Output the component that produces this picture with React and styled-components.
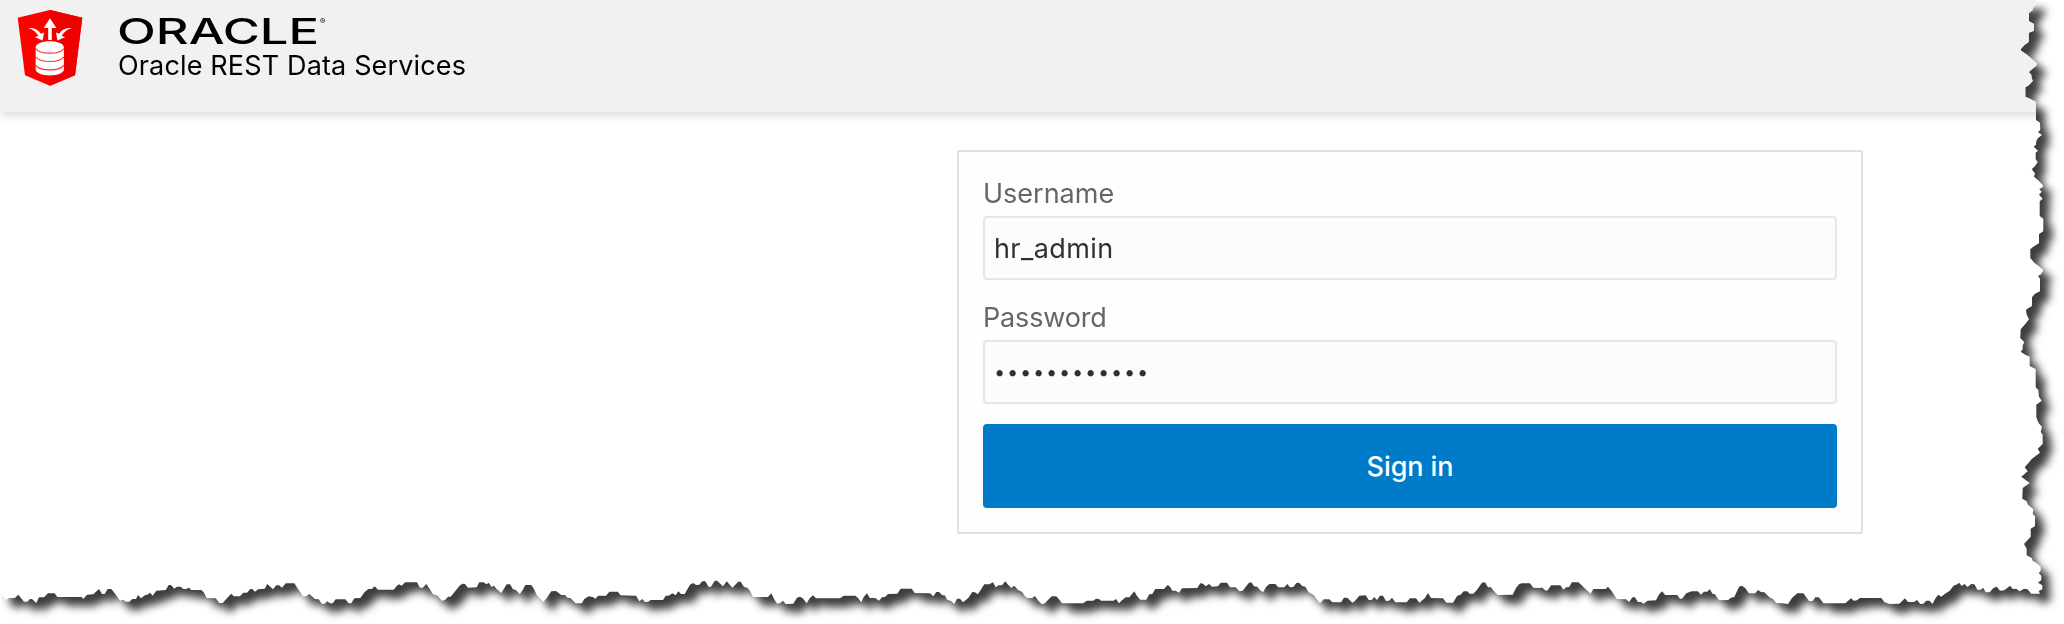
import React from "react";
import styled, { createGlobalStyle } from "styled-components";

const GlobalStyle = createGlobalStyle`
  * { box-sizing: border-box; }
  body {
    margin: 0;
    background: #fff;
    overflow: hidden;
    font-family: Inter, "Liberation Sans", sans-serif;
  }
`;

/* Torn paper outline. Each run lists x,y pairs measured from its own
   origin; xScale and the default third turn them into pixels. */
const rightEdge = [
  { x: 1980, y: 0, points: "168,0 168,14 160,20 158,30 147,38 147,64 162,72 162,92 146,98 146,126 134,134 123,146 123,152 138,162 150,172 170,190 170,196 156,208 146,216 154,224 155,236 159,242 146,256 136,262 136,290 150,296 168,306 168,360 180,368 181,390 174,396 186,405 174,414 169,424 168,434 161,440 174,452 167,458 167,478 173,486 165,498 155,508 165,520 162,530 176,542 189,556 188,562 178,567 185,575 177,584 188,596 179,604 179,648 190,656 190,694 177,702 177,730 160,740 151,748 151,774 163,788 176,798 190,810 184,822 174,828 180,836 180,874 164,882 156,892 156,918 142,926 138,930" },
  { x: 1980, y: 310, points: "140,14 147,28 136,42 122,58 121,84 133,97 128,106 128,118 122,125 136,134 149,140 149,168 167,177 167,232 175,240 177,260 185,272 169,284 169,322 176,340 186,350 182,366 188,374 188,402 173,416 180,428 156,446 134,472 143,484 124,500 149,519 128,534 127,566 140,574 144,584 160,598 158,612 165,618 165,648 152,656 152,680 132,702 140,716 140,736 155,744 158,752 170,760 182,770 182,782 176,790 184,797 184,810 174,818 187,826 187,838 176,843 180,851 154,851" },
];

const bottomEdge = [
  { x: 0, y: 560, points: "0,97 10,108 18,120 26,114 44,114 55,104 72,125 82,125 90,117 96,117 109,129 117,112 132,112 144,100 164,100 172,111 245,111 250,117 261,104 280,103 297,87 306,102 314,102 323,87 334,87 346,102 360,122 369,119 378,125 388,125 397,117 408,117 414,105 423,115 436,105 441,105 450,98 458,107 469,92 497,90 506,75 513,75 523,86 530,80 542,80 550,87 557,87 567,83 574,90 604,90 611,97 620,114 647,115 658,129 668,129 685,110 694,101 701,109 720,109 730,98 741,98 751,87 757,87 765,95 774,88 794,86 802,72 819,88 829,76 837,76 846,83 857,70 883,70 892,84 909,109 919,109 928,102 945,117 956,118 966,132 974,131 982,124 990,130 998,130 1007,118 1036,118 1046,130 1054,130 1063,115 1081,114 1094,96 1105,87 1115,87 1124,79 1134,89 1181,89 1190,78 1197,73 1205,77 1215,67 1251,67 1260,83 1268,83 1279,72 1289,87 1299,103 1313,107 1325,122 1335,120 1344,110 1352,110 1380,76 1388,71 1395,72 1404,83 1430,82 1438,67 1450,67 1460,73 1466,68 1475,81 1482,77 1489,86 1504,99 1520,73 1530,73 1539,88 1548,90 1558,101" },
  { x: 510, y: 560, points: "30,101 38,90 46,75 64,75 72,87 80,105 100,126 110,114 124,94 138,93 154,105 165,105 172,113 181,114 197,130 215,130 223,117 236,109 248,111 256,116 265,107 288,107 298,95 323,95 332,106 378,107 388,124 397,117 405,126 415,125 422,120 459,120 467,107 476,107 487,100 497,106 505,94 513,102 524,102 540,74 550,69 558,75 568,74 577,64 586,64 596,81 603,80 614,62 621,62 639,79 650,64 667,83 685,65 692,65 702,81 712,83 720,93 729,111 774,111 784,100 794,121 802,131 810,129 819,122 827,132 850,131 861,113 870,110 878,115 890,130 899,115 909,106 918,115 990,115 1001,107 1036,107 1044,114 1054,127 1061,111 1071,100 1079,114 1096,114 1107,122 1116,112 1125,111 1134,102 1162,101 1172,86 1205,86 1214,99 1260,100 1270,109 1279,96 1287,96 1297,106 1304,106 1312,120 1322,122 1333,132 1341,116 1350,116 1359,127 1375,114 1387,96 1395,97 1403,103 1412,90 1423,73 1438,73 1449,67 1457,82 1466,76 1476,76 1486,64 1494,74 1504,84 1513,77 1524,90 1537,96 1544,108 1552,114" },
  { x: 1020, y: 560, points: "22,114 36,114 45,108 55,122 65,132 73,131 95,109 109,109 118,119 126,130 190,130 200,122 220,122 228,116 237,117 243,122 280,122 288,117 297,130 306,121 317,112 328,112 343,94 351,108 361,119 379,119 388,103 397,102 406,87 432,87 443,75 450,80 457,92 467,92 477,98 486,85 532,84 541,70 549,71 557,79 567,72 576,80 594,79 602,68 621,68 630,82 647,82 658,94 668,92 686,69 694,67 702,79 712,80 720,90 729,97 739,80 748,72 766,72 775,82 793,82 802,72 810,82 820,81 829,69 837,68 847,78 856,80 866,97 881,105 892,120 900,130 911,118 928,118 937,127 963,127 972,113 982,113 997,128 1004,124 1018,107 1037,106 1046,120 1055,120 1063,111 1071,120 1080,107 1089,107 1098,123 1107,122 1116,113 1126,127 1160,127 1170,115 1188,115 1198,128 1214,115 1224,99 1233,114 1269,115 1279,128 1299,128 1312,107 1322,104 1331,94 1342,94 1349,101 1360,101 1370,91 1386,68 1395,67 1404,82 1413,82 1422,94 1433,105 1478,104 1488,84 1497,73 1505,70 1530,70 1540,83 1558,84" },
  { x: 1530, y: 560, xScale: 0.3405, points: "36,83 46,92 52,91 62,76 89,76 98,89 106,82 115,81 123,67 142,67 160,84 178,101 186,87 222,87 229,80 239,92 255,117 282,118 291,126 301,112 308,112 317,126 326,126 334,131 345,122 370,121 380,102 388,94 397,105 432,105 441,117 448,115 459,100 475,94 493,94 502,104 511,95 520,95 528,88 536,101 543,103 555,121 582,120 590,113 600,111 614,80 622,77 632,84 643,100 661,100 670,90 678,96 688,97 703,112 714,118 723,129 740,130 758,132 769,115 785,100 803,100 820,124 830,123 838,112 848,112 862,130 926,130 943,115 951,122 960,121 969,114 1032,114 1041,127 1056,132 1085,131 1101,115 1110,126 1128,126 1137,120 1146,132 1155,131 1164,122 1173,122 1182,132 1191,115 1199,104 1208,110 1222,99 1232,93 1244,77 1255,73 1260,68 1268,78 1276,72 1285,81 1296,72 1305,73 1314,89 1324,89 1331,83 1338,97 1350,97 1361,84 1371,80 1380,92 1393,91 1410,77 1418,87 1428,86 1438,94 1451,86 1461,88 1472,101" },
];

const toPixels = ({ x, y, xScale = 1 / 3, points }) =>
  points.split(" ").map((pair) => {
    const [px, py] = pair.split(",").map(Number);
    return `${(x + px * xScale).toFixed(1)}px ${(y + py / 3).toFixed(1)}px`;
  });

const tornOutline = [
  "0 0",
  ...rightEdge.flatMap(toPixels),
  ...bottomEdge.flatMap(toPixels).reverse(),
].join(", ");

const Stage = styled.div`
  height: 624px;
  overflow: hidden;
  filter: drop-shadow(9px 9px 4px rgba(0, 0, 0, 0.76));
`;

const Page = styled.div`
  height: 624px;
  background: #fff;
  clip-path: polygon(${tornOutline});
`;

const Header = styled.header`
  display: flex;
  align-items: flex-start;
  height: 112px;
  padding: 9px 0 0 16px;
  background: #f1f1f1;
  box-shadow: 0 4px 8px rgba(0, 0, 0, 0.13);
`;

const Shield = styled.svg`
  width: 68px;
  height: 78px;
`;

const Brand = styled.div`
  display: flex;
  flex-direction: column;
  margin: 5px 0 0 34px;
`;

const Wordmark = styled.svg`
  display: block;
  width: 216px;
  height: 35px;
  overflow: visible;
  fill: #000;
`;

const Product = styled.div`
  font-size: 27px;
  line-height: 34px;
  letter-spacing: 0.15px;
  color: #000;
  white-space: nowrap;
`;

const Main = styled.main`
  padding: 38px 0 0 957px;
`;

const Card = styled.form`
  display: flex;
  flex-direction: column;
  width: 906px;
  height: 384px;
  padding: 24px;
  border: 2px solid #e0e0e0;
  border-radius: 2px;
  background: #fefefe;
`;

const Field = styled.label`
  display: flex;
  flex-direction: column;
  height: ${(p) => p.$height}px;
`;

const Caption = styled.span`
  height: 40px;
  line-height: 36px;
  font-size: 27px;
  letter-spacing: ${(p) => p.$tracking}px;
  color: #666;
`;

const Input = styled.input`
  height: 64px;
  padding: 0 9px;
  border: 2px solid #e6e6e6;
  border-radius: 4px;
  outline: none;
  background: #fcfcfc;
  font-family: inherit;
  font-size: ${(p) => p.$size}px;
  letter-spacing: ${(p) => p.$tracking}px;
  color: #303030;
`;

const SubmitButton = styled.button`
  height: 84px;
  margin-top: 20px;
  padding: 0;
  border: 0;
  border-radius: 4px;
  background: #007bc9;
  font-family: inherit;
  font-size: 27px;
  font-weight: 500;
  letter-spacing: -0.1px;
  color: #fff;
`;

function OrdsShield() {
  return (
    <Shield viewBox="0 0 68 78" aria-hidden="true">
      <path d="M1.7 8.7 34 1l32.3 7.700L59 66.300 34 76.700 9 66.300Z" fill="#f00" />
      <path d="M34 1l32.300 7.700L59 66.300 34 76.700Z" fill="#ee0000" />
      <g fill="#fff">
        <path d="M34 9.200 40.300 19h-4.500v12h-3.600V19h-4.500Z" />
        <path d="M12.300 19c5.700-.2 10.300 1.700 12.500 5.800l3.200-1.400-1.400 8.200-7.600-3.300 3.300-1.600c-2.200-3.700-5.400-6.100-10-7.700Z" />
        <path d="M55.700 19c-5.700-.2-10.300 1.700-12.500 5.800l-3.200-1.400 1.400 8.200 7.600-3.300-3.300-1.600c2.200-3.700 5.400-6.100 10-7.700Z" />
        <path d="M19.700 38.200c0-3.300 6.400-5.900 14.100-5.900s14.100 2.600 14.100 5.900v22.300c0 3.300-6.400 5.900-14.100 5.900s-14.100-2.600-14.100-5.900Z" />
      </g>
      <g fill="none" stroke="#f33" strokeWidth="1.200">
        <path d="M19.700 39.500c2 3.200 7.500 4.700 14.100 4.700s12.100-1.500 14.100-4.700" />
        <path d="M19.700 47.800c2 3.200 7.500 4.700 14.100 4.700s12.100-1.500 14.100-4.700" />
        <path d="M19.700 56.100c2 3.200 7.500 4.700 14.100 4.700s12.100-1.500 14.100-4.700" />
      </g>
    </Shield>
  );
}

export default function App() {
  return (
    <>
      <GlobalStyle />
      <Stage>
        <Page>
          <Header>
            <OrdsShield />
            <Brand>
              <Wordmark viewBox="0 0 216 35">
                <text x="-1" y="29.800" fontSize="35" fontWeight="500" textLength="202" lengthAdjust="spacingAndGlyphs">ORACLE</text>
                <text x="202" y="10" fontSize="8">®</text>
              </Wordmark>
              <Product>Oracle REST Data Services</Product>
            </Brand>
          </Header>
          <Main>
            <Card onSubmit={(e) => e.preventDefault()}>
              <Field $height={124}>
                <Caption $tracking={0}>Username</Caption>
                <Input $size={27} $tracking={0.4} defaultValue="hr_admin" />
              </Field>
              <Field $height={104}>
                <Caption $tracking={-0.15}>Password</Caption>
                <Input $size={20} $tracking={1.75} type="password" defaultValue="············" />
              </Field>
              <SubmitButton>Sign in</SubmitButton>
            </Card>
          </Main>
        </Page>
      </Stage>
    </>
  );
}
